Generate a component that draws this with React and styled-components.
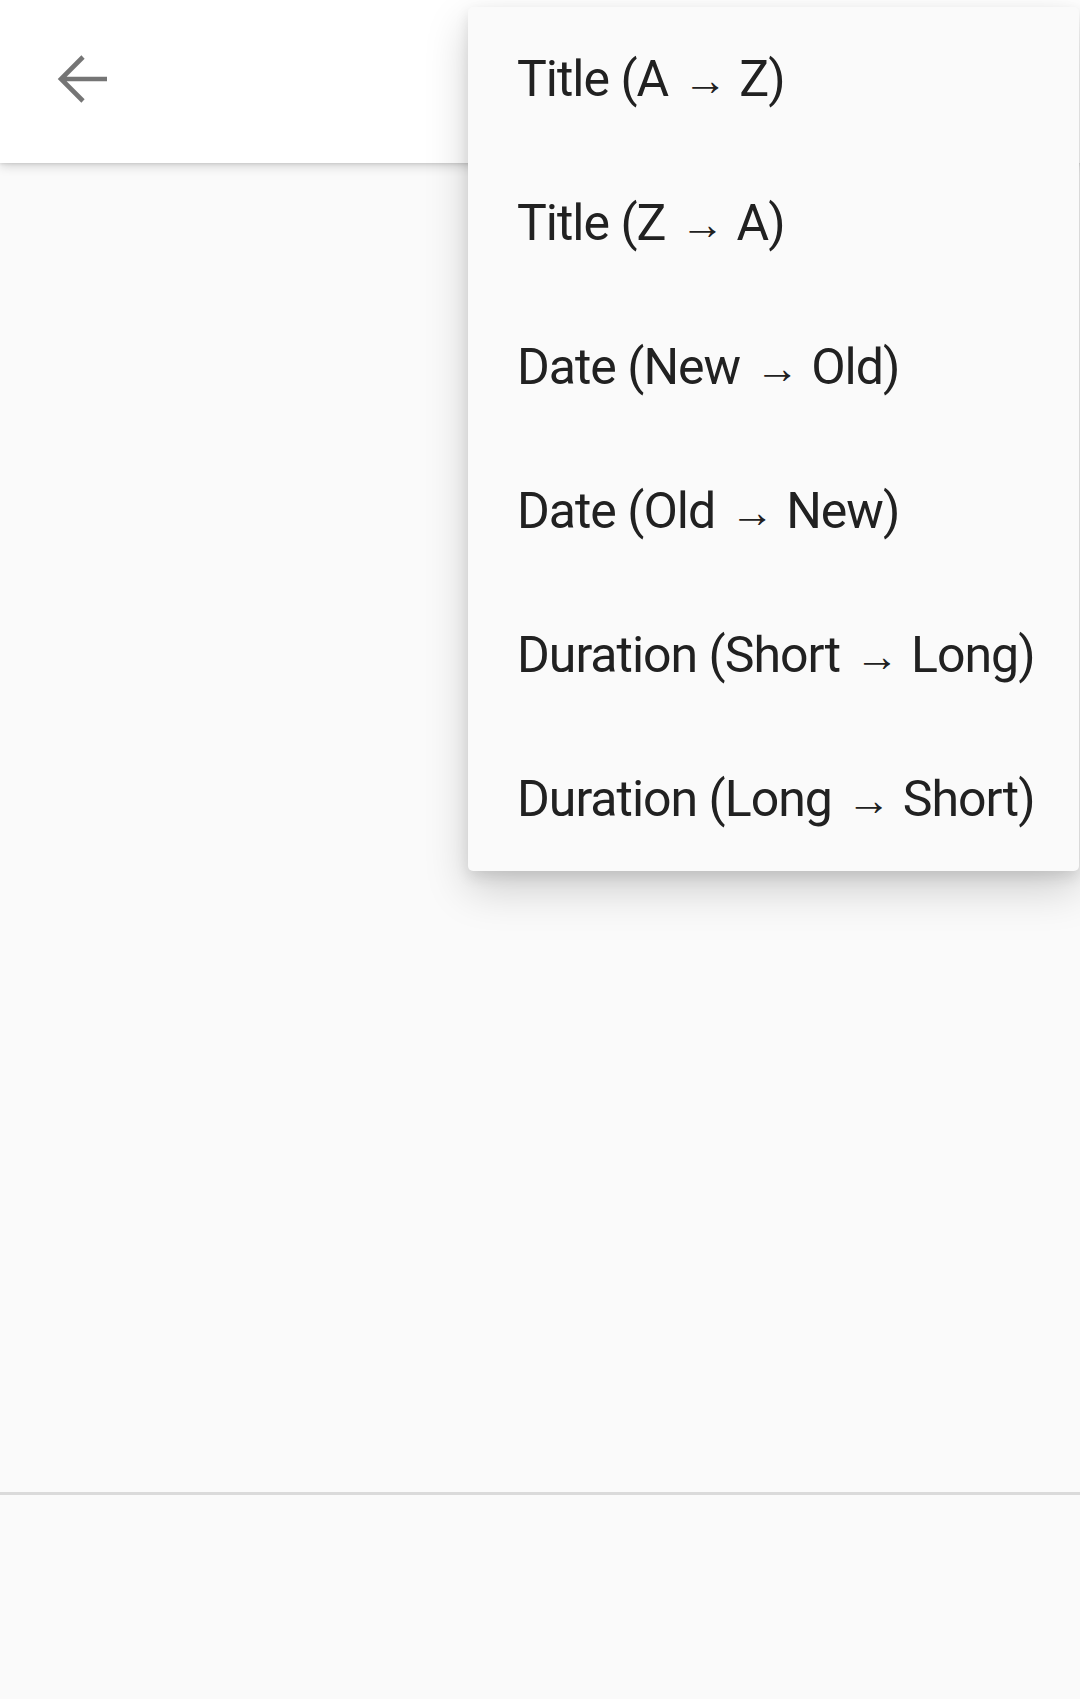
import React from 'react';
import styled, { createGlobalStyle } from 'styled-components';

const GlobalStyle = createGlobalStyle`
	html, body {
		margin: 0;
		padding: 0;
		background: #fafafa;
		font-family: Roboto, 'Noto Sans', sans-serif;
	}
`;

const sortOptions = [
	{ field: 'Title', from: 'A', to: 'Z' },
	{ field: 'Title', from: 'Z', to: 'A' },
	{ field: 'Date', from: 'New', to: 'Old' },
	{ field: 'Date', from: 'Old', to: 'New' },
	{ field: 'Duration', from: 'Short', to: 'Long' },
	{ field: 'Duration', from: 'Long', to: 'Short' },
];

export default function App() {
	return (
		<Screen>
			<GlobalStyle />
			<AppBar>
				<BackButton>
					<svg width="52" height="52" viewBox="0 0 52 52">
						<path
							d="M50 26H4M26 4L4 26l22 22"
							fill="none"
							stroke="#757575"
							strokeWidth="4.6"
						/>
					</svg>
				</BackButton>
			</AppBar>
			<Content />
			<Divider />
			<Footer />
			<SortMenu>
				{sortOptions.map((item, index) => (
					<MenuItem key={index}>
						{item.field} ({item.from}
						<Arrow>→</Arrow>
						{item.to})
					</MenuItem>
				))}
			</SortMenu>
		</Screen>
	);
}

const Screen = styled.div`
	position: relative;
	width: 1080px;
	height: 1699px;
	display: flex;
	flex-direction: column;
	background: #fafafa;
	overflow: hidden;
`;

const AppBar = styled.div`
	height: 163px;
	flex-shrink: 0;
	background: #ffffff;
	display: flex;
	align-items: flex-start;
	padding-left: 57px;
	padding-top: 53px;
	box-sizing: border-box;
	box-shadow: 0 3px 10px rgba(0, 0, 0, 0.16), 0 1px 3px rgba(0, 0, 0, 0.1);
	position: relative;
	z-index: 1;
`;

const BackButton = styled.div`
	width: 52px;
	height: 52px;
	display: flex;
`;

const Content = styled.div`
	flex: 0 0 1329px;
`;

const Divider = styled.div`
	height: 3px;
	background: #dadada;
`;

const Footer = styled.div`
	flex: 1;
	background: #fafafa;
`;

const SortMenu = styled.div`
	position: absolute;
	top: 7px;
	left: 468px;
	right: 1px;
	z-index: 2;
	background: #fafafa;
	border-radius: 5px;
	box-shadow: 0 18px 44px rgba(0, 0, 0, 0.18), 0 6px 14px rgba(0, 0, 0, 0.1);
`;

const MenuItem = styled.div`
	height: 144px;
	line-height: 144px;
	padding-left: 49px;
	font-size: 50px;
	letter-spacing: -1px;
	color: #212121;
	white-space: nowrap;
`;

const Arrow = styled.span`
	display: inline-block;
	font-size: 44px;
	margin: 0 12px 0 15px;
	vertical-align: 1px;
	letter-spacing: 0;
`;
